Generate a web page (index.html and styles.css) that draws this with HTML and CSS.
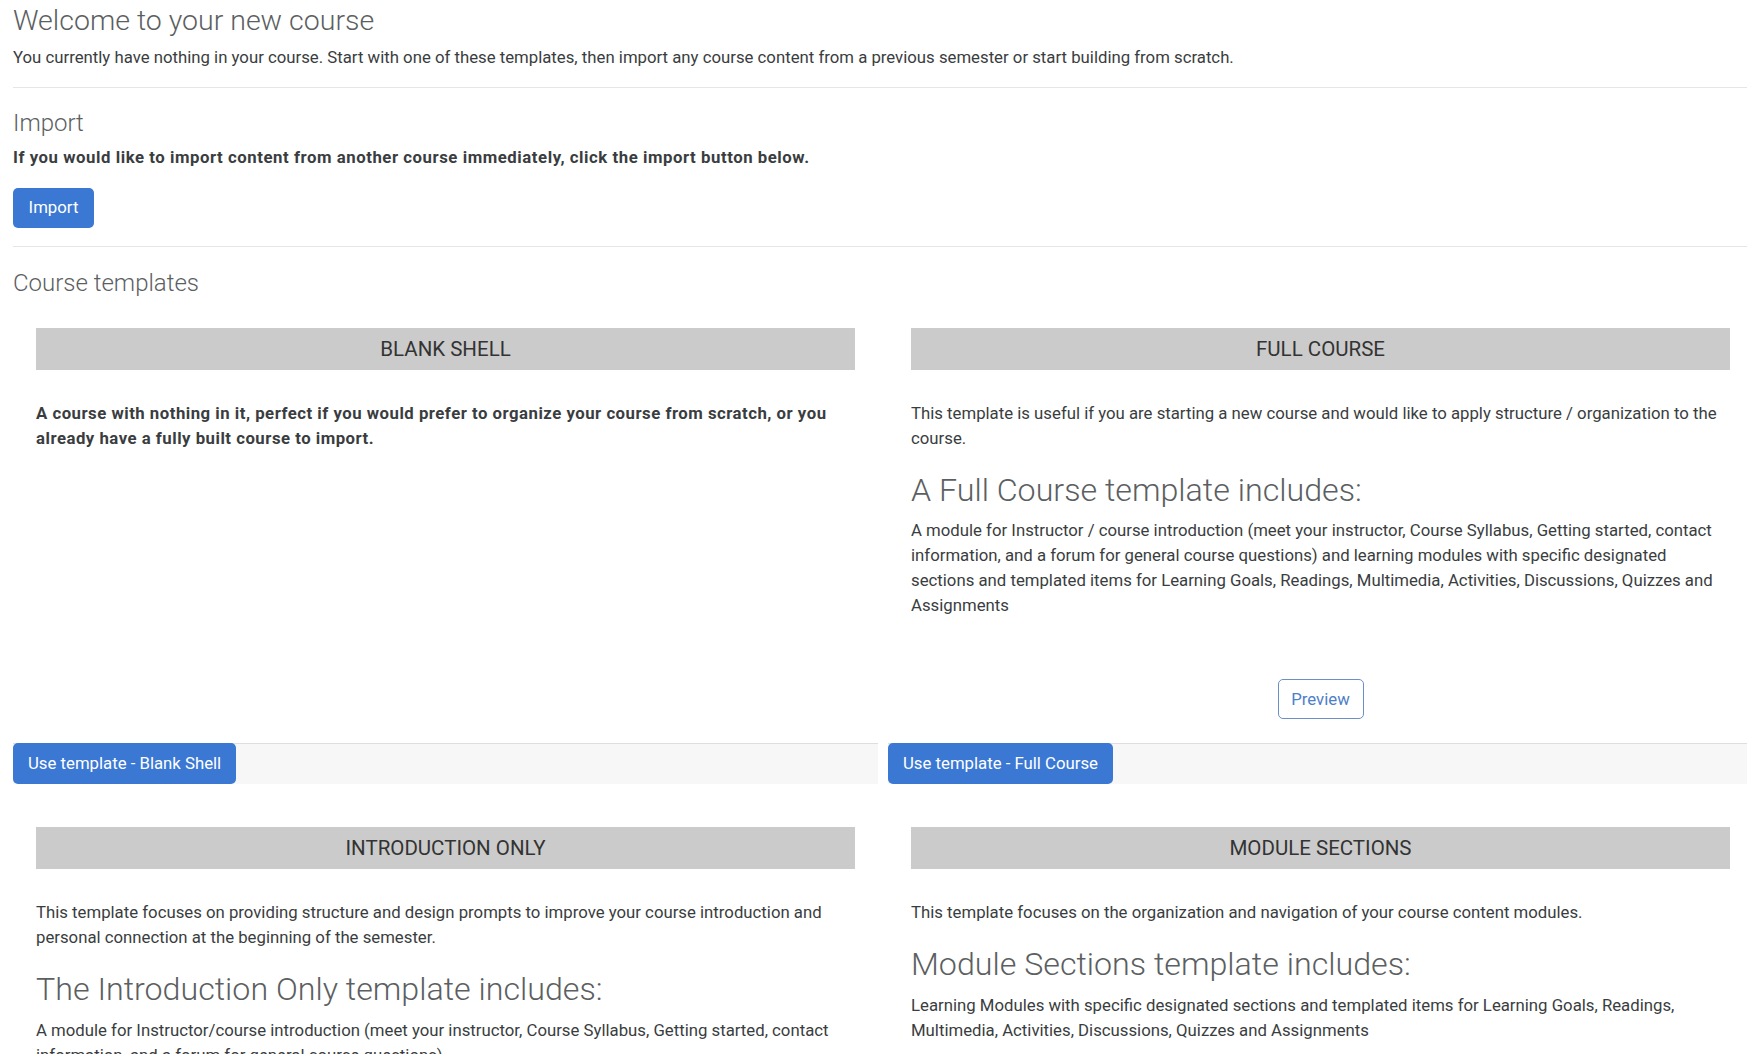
FILE: index.html
```html
<!DOCTYPE html>
<html lang="en">
<head>
<meta charset="utf-8">
<title>Welcome to your new course</title>
<link rel="stylesheet" href="styles.css">
</head>
<body>
<div class="page">
  <h3 class="title">Welcome to your new course</h3>
  <p class="lead">You currently have nothing in your course. Start with one of these templates, then import any course content from a previous semester or start building from scratch.</p>
  <hr class="rule">
  <h4 class="section-title">Import</h4>
  <p class="strong-text">If you would like to import content from another course immediately, click the import button below.</p>
  <button class="btn btn-primary btn-import" type="button">Import</button>
  <hr class="rule rule-2">
  <h4 class="section-title section-title-last">Course templates</h4>

  <div class="templates">
    <div class="card">
      <div class="card-body">
        <div class="card-head">BLANK SHELL</div>
        <p class="desc strong-text">A course with nothing in it, perfect if you would prefer to organize your course from scratch, or you<br>already have a fully built course to import.</p>
      </div>
      <div class="card-foot"><button class="btn btn-primary btn-use" type="button">Use template - Blank Shell</button></div>
    </div>

    <div class="card">
      <div class="card-body">
        <div class="card-head">FULL COURSE</div>
        <p class="desc">This template is useful if you are starting a new course and would like to apply structure / organization to the<br>course.</p>
        <h2 class="includes">A Full Course template includes:</h2>
        <p class="detail">A module for Instructor / course introduction (meet your instructor, Course Syllabus, Getting started, contact<br>information, and a forum for general course questions) and learning modules with specific designated<br>sections and templated items for Learning Goals, Readings, Multimedia, Activities, Discussions, Quizzes and<br>Assignments</p>
        <div class="preview-wrap"><button class="btn btn-outline" type="button">Preview</button></div>
      </div>
      <div class="card-foot"><button class="btn btn-primary btn-use" type="button">Use template - Full Course</button></div>
    </div>

    <div class="card">
      <div class="card-body">
        <div class="card-head">INTRODUCTION ONLY</div>
        <p class="desc">This template focuses on providing structure and design prompts to improve your course introduction and<br>personal connection at the beginning of the semester.</p>
        <h2 class="includes">The Introduction Only template includes:</h2>
        <p class="detail">A module for Instructor/course introduction (meet your instructor, Course Syllabus, Getting started, contact<br>information, and a forum for general course questions).</p>
        <div class="preview-wrap"><button class="btn btn-outline" type="button">Preview</button></div>
      </div>
      <div class="card-foot"><button class="btn btn-primary btn-use" type="button">Use template - Introduction Only</button></div>
    </div>

    <div class="card">
      <div class="card-body">
        <div class="card-head">MODULE SECTIONS</div>
        <p class="desc">This template focuses on the organization and navigation of your course content modules.</p>
        <h2 class="includes">Module Sections template includes:</h2>
        <p class="detail">Learning Modules with specific designated sections and templated items for Learning Goals, Readings,<br>Multimedia, Activities, Discussions, Quizzes and Assignments</p>
        <div class="preview-wrap"><button class="btn btn-outline" type="button">Preview</button></div>
      </div>
      <div class="card-foot"><button class="btn btn-primary btn-use" type="button">Use template - Module Sections</button></div>
    </div>
  </div>
</div>
</body>
</html>
```

FILE: styles.css
```css
html {
  overflow: hidden;
}

body {
  margin: 0;
  background: #ffffff;
  color: #3a3d40;
  font-family: Roboto, "Liberation Sans", Arial, sans-serif;
  font-size: 16.75px;
  line-height: 25px;
}

.page {
  padding: 3px 0 0 13px;
}

.title {
  margin: 0 0 6.5px;
  font-size: 28.5px;
  line-height: 35px;
  font-weight: 300;
  color: #5c5f62;
}

.lead {
  margin: 0 0 17.5px;
}

.rule {
  border: 0;
  border-top: 1px solid #e6e6e6;
  margin: 0 0 20.6px;
  height: 0;
}

.rule-2 {
  margin-bottom: 21.6px;
}

.section-title {
  margin: 0 0 8px;
  font-size: 24px;
  line-height: 28.8px;
  font-weight: 300;
  color: #5c5f62;
}

.section-title-last {
  margin-bottom: 0;
}

.strong-text {
  font-weight: 700;
  letter-spacing: 0.55px;
  margin: 0 0 17.6px;
}

.btn {
  font-family: inherit;
  font-size: 16.75px;
  line-height: 25px;
  border-radius: 5px;
  cursor: pointer;
}

.btn-primary {
  background: #3a78d3;
  color: #ffffff;
  border: 0;
}

.btn-import {
  display: block;
  width: 81px;
  height: 40px;
  padding: 0;
  margin-bottom: 18px;
}

.templates {
  display: grid;
  grid-template-columns: 865px 865px;
  column-gap: 10px;
  row-gap: 12px;
  width: 1740px;
}

.card {
  display: flex;
  flex-direction: column;
}

.card-body {
  flex: 1;
  padding: 31px 23px 24px;
}

.card-head {
  height: 42px;
  line-height: 42px;
  background: #cbcbcb;
  color: #333333;
  text-align: center;
  font-size: 20.5px;
}

.desc {
  margin: 31px 0 20px;
}

.desc.strong-text {
  margin-bottom: 20px;
  letter-spacing: 0.5px;
}

.includes {
  margin: 0 0 7.5px;
  font-size: 32.2px;
  line-height: 39.6px;
  font-weight: 300;
  color: #5c5f62;
}

.detail {
  margin: 0;
}

.preview-wrap {
  display: flex;
  justify-content: center;
  margin-top: 61px;
}

.btn-outline {
  background: #ffffff;
  color: #4d80c9;
  border: 1px solid #6c8fc6;
  width: 86px;
  height: 40px;
  padding: 0;
}

.card-foot {
  background: #f7f7f7;
  box-shadow: inset 0 1px 0 #dedede;
  height: 41px;
}

.btn-use {
  height: 41px;
  padding: 0 15px;
}
```
